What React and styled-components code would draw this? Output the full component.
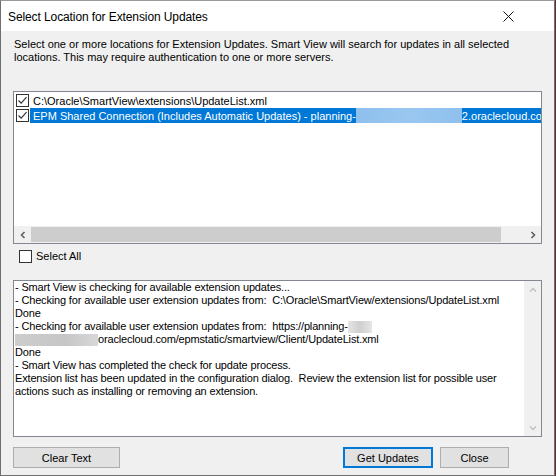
import React from "react";
import styled, { createGlobalStyle } from "styled-components";

const Global = createGlobalStyle`
  html, body { margin: 0; padding: 0; background: #6b2b2b; }
  #root { width: 556px; height: 476px; }
`;

const Window = styled.div`
  box-sizing: border-box;
  width: 555px;
  height: 476px;
  border: 1px solid #6f6f6f;
  border-top-color: #9a9a9a;
  background: #f0f0f0;
  display: flex;
  flex-direction: column;
  font-family: "Liberation Sans", Arial, sans-serif;
  font-size: 11px;
  color: #000;
`;

const TitleBar = styled.div`
  height: 30px;
  background: #fff;
  display: flex;
  align-items: center;
  justify-content: space-between;
  padding: 0 0 0 7px;
  flex: none;
`;

const TitleText = styled.span`
  font-family: "Liberation Sans", Arial, sans-serif;
  font-size: 12px;
  letter-spacing: -0.1px;
  padding-top: 1px;
`;

const CloseBtn = styled.div`
  width: 46px;
  height: 30px;
  display: flex;
  align-items: center;
  justify-content: center;
  margin-right: 23px;
`;

const Body = styled.div`
  flex: 1;
  display: flex;
  flex-direction: column;
  padding: 0 12px 0 12px;
`;

const Description = styled.p`
  margin: 7px 0 0 1px;
  line-height: 13px;
  flex: none;
`;

const ListBox = styled.div`
  margin-top: 27px;
  box-sizing: border-box;
  height: 153px;
  border: 1px solid #828790;
  background: #fff;
  display: flex;
  flex-direction: column;
  flex: none;
`;

const Items = styled.div`
  flex: 1;
  padding-top: 1px;
  overflow: hidden;
`;

const Item = styled.div`
  display: flex;
  align-items: center;
  height: 15px;
  padding-left: 2px;
  white-space: nowrap;
`;

const ItemLabel = styled.span`
  display: flex;
  align-items: center;
  height: 15px;
  flex: 1;
  margin-left: 1px;
  padding-left: 3px;
  background: ${(p) => (p.selected ? "#0078d7" : "transparent")};
  color: ${(p) => (p.selected ? "#fff" : "#000")};
`;

const Blur = styled.span`
  display: inline-block;
  width: ${(p) => p.w}px;
  height: ${(p) => p.h || 13}px;
  background: ${(p) => p.bg};
  vertical-align: middle;
`;

const CheckBox = styled.span`
  box-sizing: border-box;
  width: 13px;
  height: 13px;
  border: 1px solid #333;
  background: #fff;
  flex: none;
  display: inline-flex;
  align-items: center;
  justify-content: center;
`;

const HScroll = styled.div`
  height: 17px;
  background: #f0f0f0;
  display: flex;
  align-items: center;
  flex: none;
`;

const ScrollArrow = styled.div`
  width: 17px;
  height: 17px;
  display: flex;
  align-items: center;
  justify-content: center;
  flex: none;
`;

const HTrack = styled.div`
  flex: 1;
  height: 17px;
  display: flex;
  align-items: center;
`;

const HThumb = styled.div`
  height: 15px;
  width: 470px;
  background: #cdcdcd;
`;

const SelectAllRow = styled.label`
  display: flex;
  align-items: center;
  gap: 4px;
  margin: 5px 0 0 6px;
  height: 14px;
  flex: none;
`;

const LogBox = styled.div`
  margin-top: 17px;
  box-sizing: border-box;
  height: 157px;
  border: 1px solid #828790;
  background: #fff;
  display: flex;
  flex: none;
`;

const LogText = styled.div`
  flex: 1;
  padding: 0 0 0 1px;
  line-height: 13px;
  letter-spacing: -0.16px;
  white-space: pre;
  overflow: hidden;
`;

const VScroll = styled.div`
  width: 17px;
  background: #f0f0f0;
  display: flex;
  flex-direction: column;
  justify-content: space-between;
  flex: none;
`;

const ButtonRow = styled.div`
  display: flex;
  align-items: center;
  margin-top: 10px;
  flex: none;
`;

const Button = styled.button`
  box-sizing: border-box;
  height: 21px;
  width: ${(p) => p.w}px;
  margin-left: ${(p) => p.ml || 0}px;
  background: #e1e1e1;
  border: ${(p) => (p.primary ? "2px solid #0078d7" : "1px solid #adadad")};
  font-family: "Liberation Sans", Arial, sans-serif;
  font-size: 11px;
  color: #000;
  padding: 0;
`;

const Spacer = styled.div`
  flex: 1;
`;

const RightGap = styled.div`
  width: 33px;
  flex: none;
`;

const Check = () => (
  <svg width="11" height="11" viewBox="0 0 11 11">
    <path d="M1.5 5.5 L4.2 8.2 L9.5 2.2" fill="none" stroke="#333" strokeWidth="1.2" />
  </svg>
);

export default function App() {
  return (
    <>
      <Global />
      <Window>
        <TitleBar>
          <TitleText>Select Location for Extension Updates</TitleText>
          <CloseBtn>
            <svg width="11" height="11" viewBox="0 0 11 11">
              <path d="M0.5 0.5 L10.5 10.5 M10.5 0.5 L0.5 10.5" stroke="#111" strokeWidth="1" />
            </svg>
          </CloseBtn>
        </TitleBar>
        <Body>
          <Description>
            Select one or more locations for Extension Updates. Smart View will search for updates in all selected
            <br />
            locations. This may require authentication to one or more servers.
          </Description>
          <ListBox>
            <Items>
              <Item>
                <CheckBox>
                  <Check />
                </CheckBox>
                <ItemLabel>C:\Oracle\SmartView\extensions\UpdateList.xml</ItemLabel>
              </Item>
              <Item>
                <CheckBox>
                  <Check />
                </CheckBox>
                <ItemLabel selected>
                  EPM Shared Connection (Includes Automatic Updates) - planning-
                  <Blur w={106} h={15} bg="linear-gradient(90deg,#8ec0ee,#99c7f0 50%,#8fc0ee)" />
                  2.oraclecloud.com
                </ItemLabel>
              </Item>
            </Items>
            <HScroll>
              <ScrollArrow>
                <svg width="8" height="8" viewBox="0 0 8 8">
                  <path d="M5.5 1 L2.5 4 L5.5 7" fill="none" stroke="#606060" strokeWidth="1.6" />
                </svg>
              </ScrollArrow>
              <HTrack>
                <HThumb />
              </HTrack>
              <ScrollArrow>
                <svg width="8" height="8" viewBox="0 0 8 8">
                  <path d="M2.5 1 L5.5 4 L2.5 7" fill="none" stroke="#606060" strokeWidth="1.6" />
                </svg>
              </ScrollArrow>
            </HScroll>
          </ListBox>
          <SelectAllRow>
            <CheckBox />
            <span>Select All</span>
          </SelectAllRow>
          <LogBox>
            <LogText>
              {"- Smart View is checking for available extension updates...\n"}
              {"- Checking for available user extension updates from:  C:\\Oracle\\SmartView/extensions/UpdateList.xml\n"}
              {"Done\n"}
              {"- Checking for available user extension updates from:  https://planning-"}
              <Blur w={24} h={12} bg="linear-gradient(90deg,#e4e4e4,#cfcfcf,#e6e6e6)" />
              {"\n"}
              <Blur w={83} h={12} bg="linear-gradient(90deg,#cdcdcd,#c6c6c6 60%,#d8d8d8)" />
              {"oraclecloud.com/epmstatic/smartview/Client/UpdateList.xml\n"}
              {"Done\n"}
              {"- Smart View has completed the check for update process.\n"}
              {"Extension list has been updated in the configuration dialog.  Review the extension list for possible user\n"}
              {"actions such as installing or removing an extension."}
            </LogText>
            <VScroll>
              <ScrollArrow>
                <svg width="8" height="8" viewBox="0 0 8 8">
                  <path d="M1 5.5 L4 2.5 L7 5.5" fill="none" stroke="#c0c0c0" strokeWidth="1.4" />
                </svg>
              </ScrollArrow>
              <ScrollArrow>
                <svg width="8" height="8" viewBox="0 0 8 8">
                  <path d="M1 2.5 L4 5.5 L7 2.5" fill="none" stroke="#c0c0c0" strokeWidth="1.4" />
                </svg>
              </ScrollArrow>
            </VScroll>
          </LogBox>
          <ButtonRow>
            <Button w={107}>Clear Text</Button>
            <Spacer />
            <Button primary w={90}>Get Updates</Button>
            <Button w={69} ml={7}>Close</Button>
            <RightGap />
          </ButtonRow>
        </Body>
      </Window>
    </>
  );
}
